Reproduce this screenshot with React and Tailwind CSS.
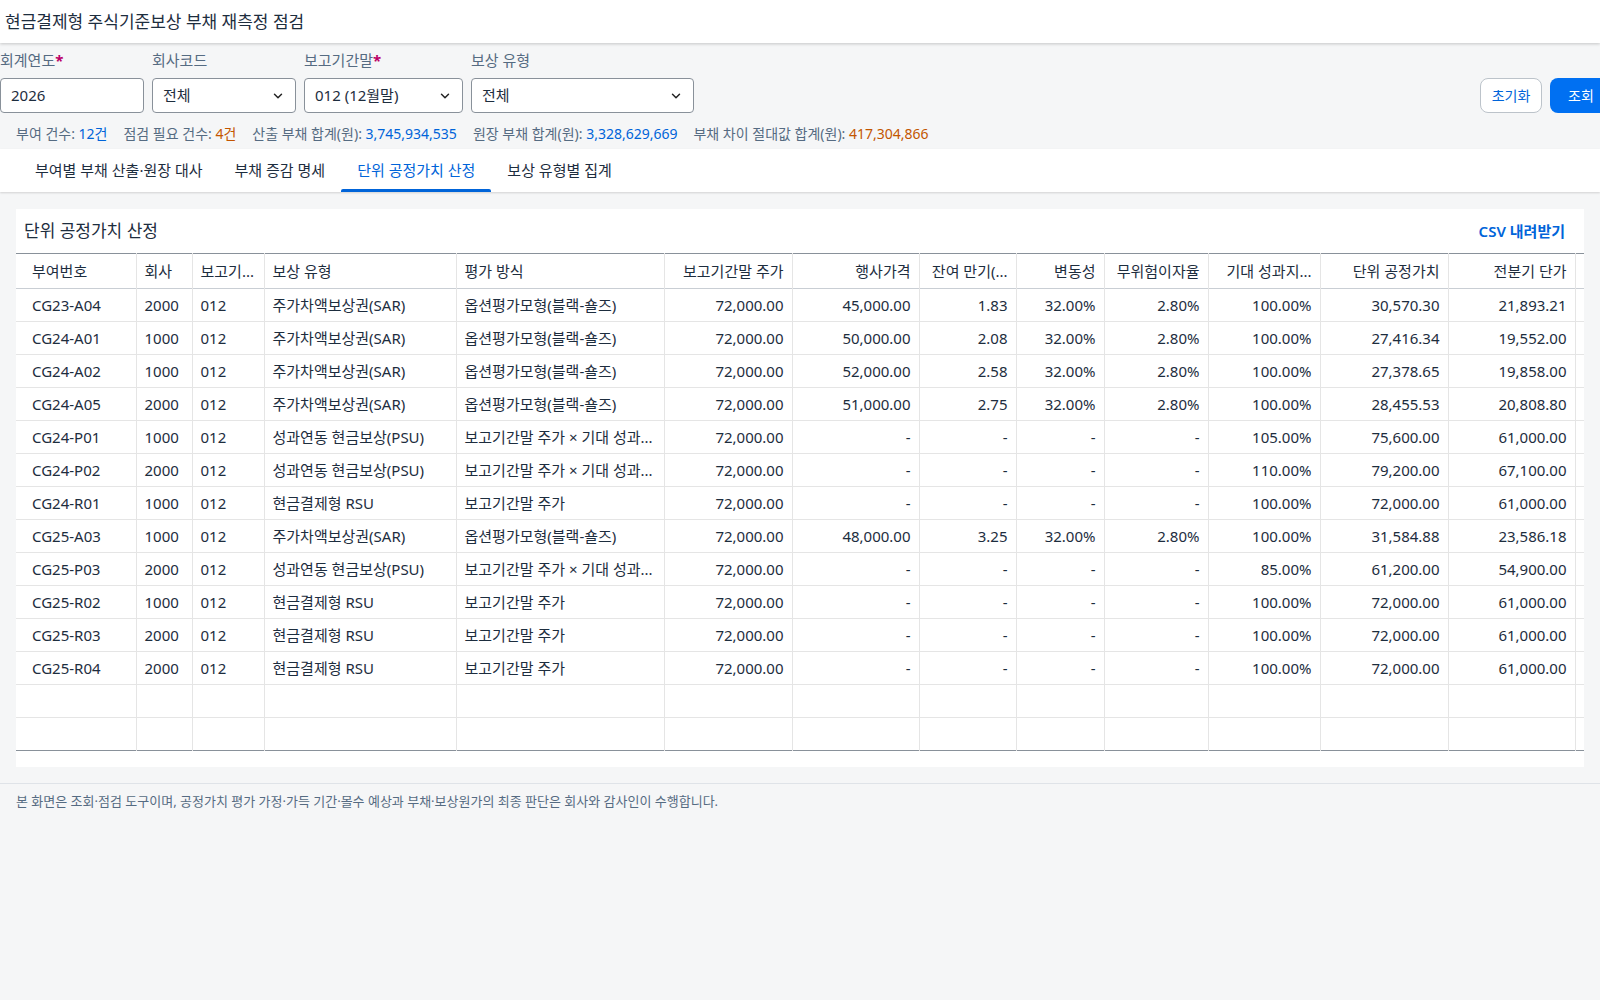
import React from "react";

const cols = [
  { h: "부여번호", w: 120, a: "l" },
  { h: "회사", w: 56, a: "l" },
  { h: "보고기...", w: 72, a: "l" },
  { h: "보상 유형", w: 192, a: "l" },
  { h: "평가 방식", w: 208, a: "l" },
  { h: "보고기간말 주가", w: 128, a: "r" },
  { h: "행사가격", w: 127, a: "r" },
  { h: "잔여 만기(...", w: 97, a: "r" },
  { h: "변동성", w: 88, a: "r" },
  { h: "무위험이자율", w: 104, a: "r" },
  { h: "기대 성과지...", w: 112, a: "r" },
  { h: "단위 공정가치", w: 128, a: "r" },
  { h: "전분기 단가", w: 127, a: "r" },
  { h: "", w: 120, a: "r" },
];

const SAR = "주가차액보상권(SAR)", BS = "옵션평가모형(블랙-숄즈)";
const PSU = "성과연동 현금보상(PSU)", PM = "보고기간말 주가 × 기대 성과...";
const RSU = "현금결제형 RSU", RM = "보고기간말 주가";
const rows = [
  ["CG23-A04", "2000", "012", SAR, BS, "72,000.00", "45,000.00", "1.83", "32.00%", "2.80%", "100.00%", "30,570.30", "21,893.21"],
  ["CG24-A01", "1000", "012", SAR, BS, "72,000.00", "50,000.00", "2.08", "32.00%", "2.80%", "100.00%", "27,416.34", "19,552.00"],
  ["CG24-A02", "1000", "012", SAR, BS, "72,000.00", "52,000.00", "2.58", "32.00%", "2.80%", "100.00%", "27,378.65", "19,858.00"],
  ["CG24-A05", "2000", "012", SAR, BS, "72,000.00", "51,000.00", "2.75", "32.00%", "2.80%", "100.00%", "28,455.53", "20,808.80"],
  ["CG24-P01", "1000", "012", PSU, PM, "72,000.00", "-", "-", "-", "-", "105.00%", "75,600.00", "61,000.00"],
  ["CG24-P02", "2000", "012", PSU, PM, "72,000.00", "-", "-", "-", "-", "110.00%", "79,200.00", "67,100.00"],
  ["CG24-R01", "1000", "012", RSU, RM, "72,000.00", "-", "-", "-", "-", "100.00%", "72,000.00", "61,000.00"],
  ["CG25-A03", "1000", "012", SAR, BS, "72,000.00", "48,000.00", "3.25", "32.00%", "2.80%", "100.00%", "31,584.88", "23,586.18"],
  ["CG25-P03", "2000", "012", PSU, PM, "72,000.00", "-", "-", "-", "-", "85.00%", "61,200.00", "54,900.00"],
  ["CG25-R02", "1000", "012", RSU, RM, "72,000.00", "-", "-", "-", "-", "100.00%", "72,000.00", "61,000.00"],
  ["CG25-R03", "2000", "012", RSU, RM, "72,000.00", "-", "-", "-", "-", "100.00%", "72,000.00", "61,000.00"],
  ["CG25-R04", "2000", "012", RSU, RM, "72,000.00", "-", "-", "-", "-", "100.00%", "72,000.00", "61,000.00"],
];

const Chevron = () => (
  <svg width="14" height="14" viewBox="0 0 24 24" fill="none" stroke="#222" strokeWidth="2.5" strokeLinecap="round" strokeLinejoin="round"><path d="M6 9l6 6 6-6" /></svg>
);

function Field({ label, req, w, value, select }) {
  return (
    <div className="flex flex-col gap-[8px]" style={{ width: w }}>
      <div className="text-[15px] text-[#556b82] leading-[20px] h-[20px]">
        {label}{req && <span className="text-[#bb0066] font-bold">*</span>}
      </div>
      <div className="h-[35px] bg-white border border-[#89919a] rounded-[4px] flex items-center justify-between px-[10px] text-[15px] text-[#1d2d3e]">
        <span>{value}</span>
        {select && <Chevron />}
      </div>
    </div>
  );
}

export default function App() {
  return (
    <div className="w-full h-[1000px] overflow-hidden bg-[#f5f6f7] text-[#1d2d3e]" style={{ fontFamily: '"Noto Sans", "Noto Sans CJK KR", sans-serif' }}>
      <div className="h-[43px] bg-white flex items-center px-[5px] shadow-[0_1px_3px_rgba(0,0,0,0.2)] relative z-10">
        <h1 className="text-[17px] text-[#1d2d3e]">현금결제형 주식기준보상 부채 재측정 점검</h1>
      </div>
      <div className="w-[1612px] flex items-end pt-[7px]">
        <div className="flex gap-[8px]">
          <Field label="회계연도" req w={144} value="2026" />
          <Field label="회사코드" w={144} value="전체" select />
          <Field label="보고기간말" req w={159} value="012 (12월말)" select />
          <Field label="보상 유형" w={223} value="전체" select />
        </div>
        <div className="flex-1" />
        <div className="flex gap-[8px]">
          <button className="h-[35px] w-[62px] bg-white border border-[#bcc3ca] rounded-[8px] text-[14px] text-[#0064d9]">초기화</button>
          <button className="h-[35px] w-[62px] bg-[#0070f2] rounded-[8px] text-[14px] text-white">조회</button>
        </div>
      </div>
      <div className="px-[16px] h-[36px] pt-[4px] flex items-center gap-[16px] text-[14px] text-[#556b82]">
        <span>부여 건수: <span className="text-[#0064d9]">12건</span></span>
        <span>점검 필요 건수: <span className="text-[#c35500]">4건</span></span>
        <span>산출 부채 합계(원): <span className="text-[#0064d9]">3,745,934,535</span></span>
        <span>원장 부채 합계(원): <span className="text-[#0064d9]">3,328,629,669</span></span>
        <span>부채 차이 절대값 합계(원): <span className="text-[#c35500]">417,304,866</span></span>
      </div>
      <div className="h-[43px] bg-white flex items-stretch px-[19px] shadow-[0_1px_2px_rgba(0,0,0,0.15)]">
        {["부여별 부채 산출·원장 대사", "부채 증감 명세", "단위 공정가치 산정", "보상 유형별 집계"].map((t, i) => (
          <div key={t} className={`px-[16px] flex items-center text-[15px] relative ${i === 2 ? "text-[#0064d9]" : "text-[#1d2d3e]"}`}>
            {t}
            {i === 2 && <div className="absolute left-0 right-0 bottom-0 h-[3px] bg-[#0064d9] rounded-t-[2px]" />}
          </div>
        ))}
      </div>
      <div className="mx-[16px] mt-[17px] bg-white overflow-hidden pb-[16px]">
        <div className="h-[44px] flex items-center justify-between pl-[8px] pr-[19px]">
          <div className="text-[17px]">단위 공정가치 산정</div>
          <div className="text-[15px] font-semibold text-[#0064d9]">CSV 내려받기</div>
        </div>
        <table className="border-collapse table-fixed text-[15px]" style={{ width: cols.reduce((s, c) => s + c.w, 0) }}>
          <colgroup>{cols.map((c, i) => <col key={i} style={{ width: c.w }} />)}</colgroup>
          <thead>
            <tr className="h-[35px] border-t border-t-[#89919a] border-b border-b-[#c9ced4]">
              {cols.map((c, i) => (
                <th key={i} className={`font-normal ${i === 0 ? "pl-[16px]" : "pl-[8px]"} pr-[8px] border-r border-[#e5e5e5] whitespace-nowrap overflow-hidden ${c.a === "r" ? "text-right" : "text-left"}`}>{c.h}</th>
              ))}
            </tr>
          </thead>
          <tbody>
            {[...rows, null, null].map((r, ri) => (
              <tr key={ri} className={`h-[33px] border-b ${ri === 13 ? "border-b-[#89919a]" : "border-b-[#e5e5e5]"}`}>
                {cols.map((c, i) => (
                  <td key={i} className={`${i === 0 ? "pl-[16px]" : "pl-[8px]"} pr-[8px] border-r border-[#e5e5e5] whitespace-nowrap overflow-hidden text-ellipsis ${c.a === "r" ? "text-right" : "text-left"}`}>{r ? r[i] ?? "" : ""}</td>
                ))}
              </tr>
            ))}
          </tbody>
        </table>
      </div>
      <div className="mt-[16px] border-t border-[#dfe3e8] px-[16px] pt-[8px] text-[13px] text-[#556b82]">
        본 화면은 조회·점검 도구이며, 공정가치 평가 가정·가득 기간·몰수 예상과 부채·보상원가의 최종 판단은 회사와 감사인이 수행합니다.
      </div>
    </div>
  );
}
